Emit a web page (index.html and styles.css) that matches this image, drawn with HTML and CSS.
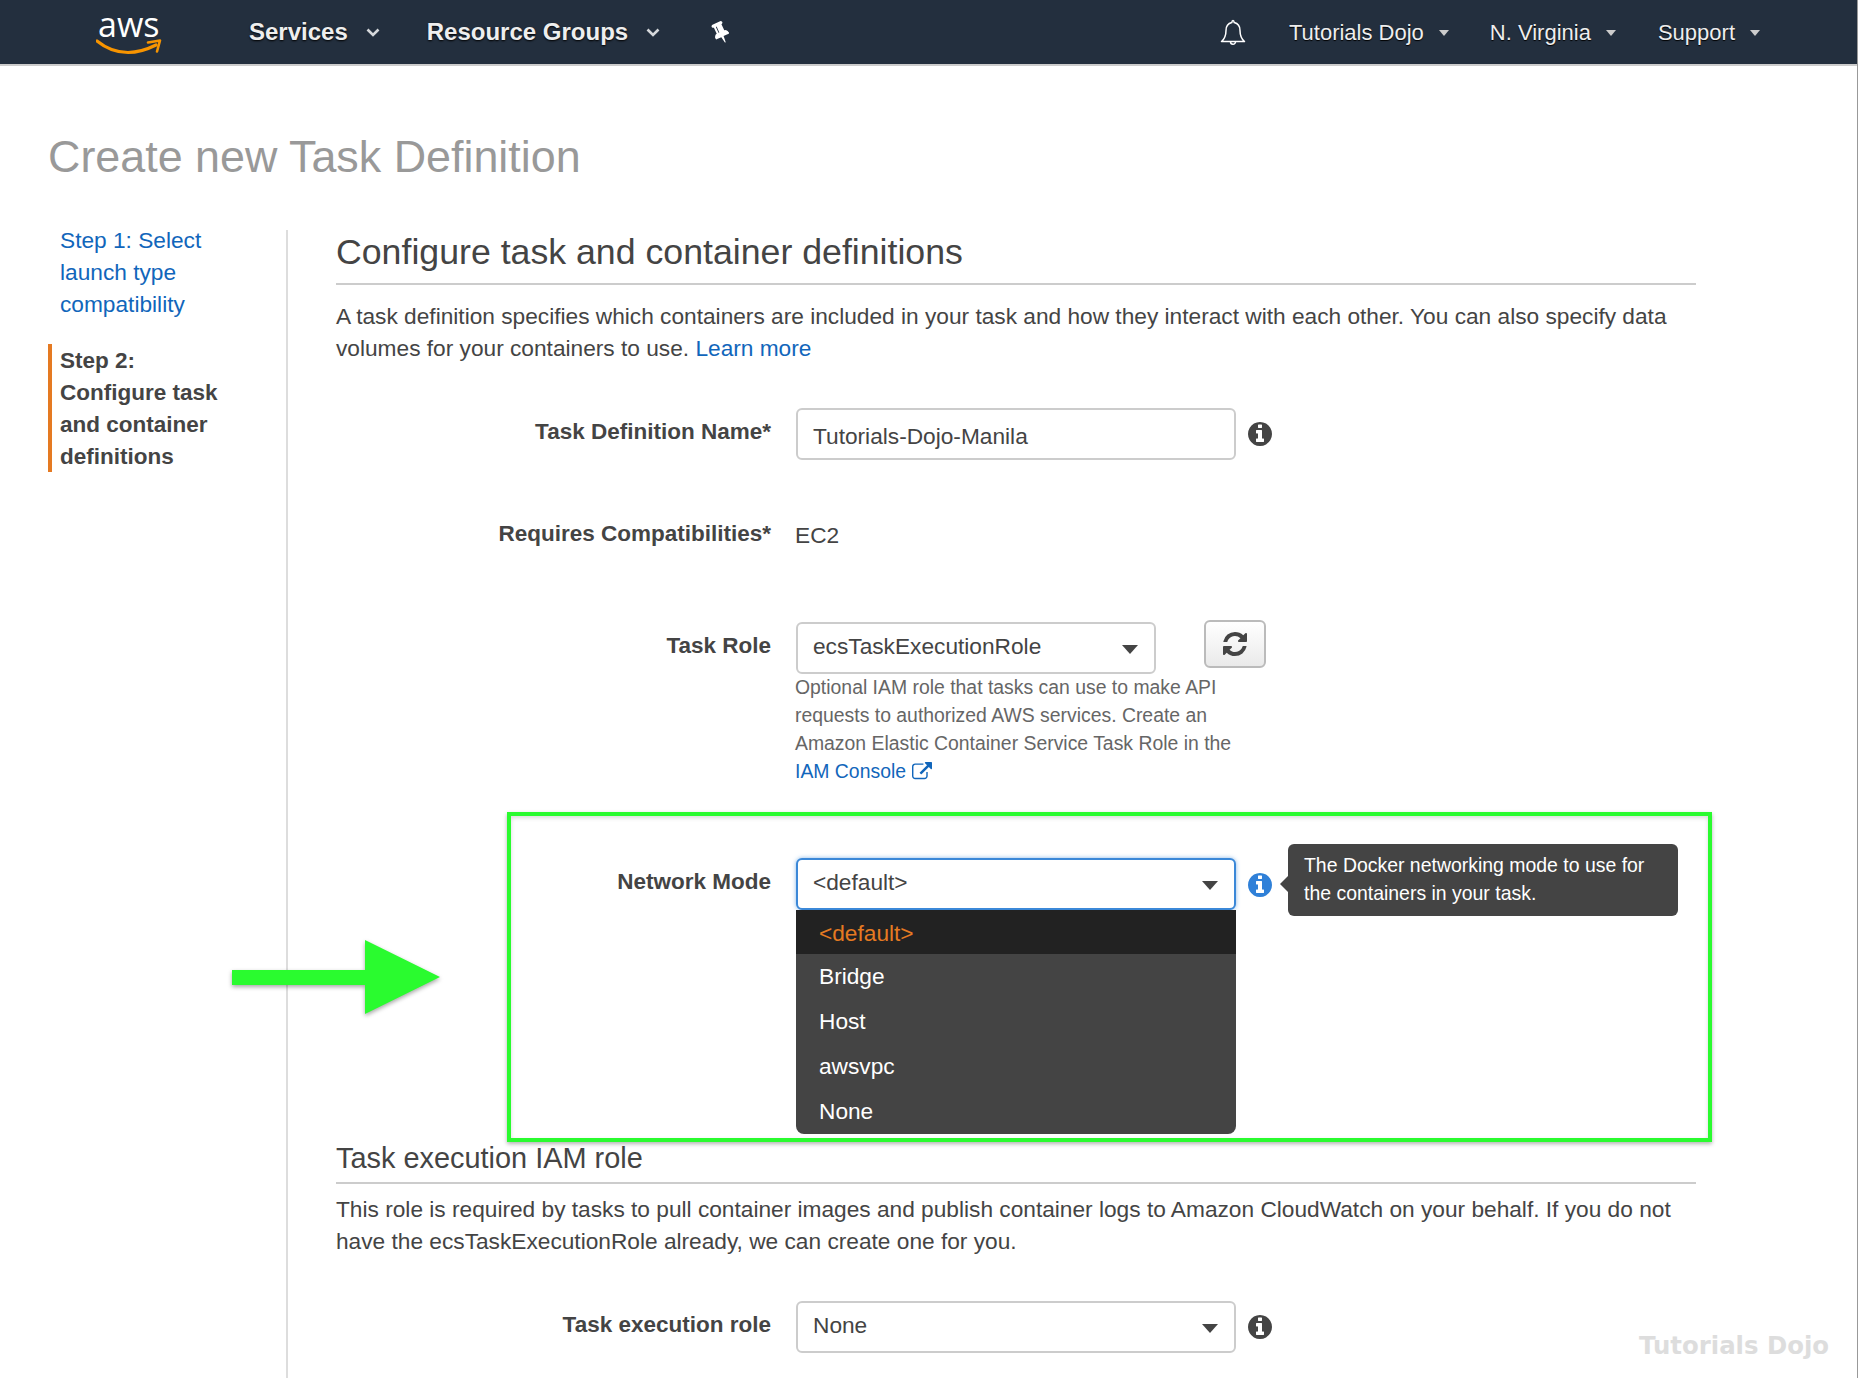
FILE: index.html
```html
<!DOCTYPE html>
<html lang="en">
<head>
<meta charset="utf-8">
<title>Create new Task Definition</title>
<link rel="stylesheet" href="styles.css">
</head>
<body>
<div class="page">
  <header class="nav">
    <div class="logo">
      <span class="logo-text">aws</span>
      <svg class="smile" viewBox="0 0 66 16"><path d="M1 2C12 11 22 13.500 32 13.500C43 13.500 52 10 60 6" fill="none" stroke="#f79400" stroke-width="3.200" stroke-linecap="round"/><path d="M52 3.500L64 1.500L61 12.500" fill="none" stroke="#f79400" stroke-width="2.600" stroke-linejoin="round" stroke-linecap="round"/></svg>
    </div>
    <a class="nav-main nav-services">Services<svg class="chev" viewBox="0 0 14 9"><path d="M1.500 1.500L7 7L12.500 1.500" fill="none" stroke="#d5d8db" stroke-width="2.600"/></svg></a>
    <a class="nav-main nav-groups">Resource Groups<svg class="chev" viewBox="0 0 14 9"><path d="M1.500 1.500L7 7L12.500 1.500" fill="none" stroke="#d5d8db" stroke-width="2.600"/></svg></a>
    <svg class="pin" viewBox="0 0 1152 1792"><path fill="#fff" d="M480 864v-448q0-14-9-23t-23-9-23 9-9 23v448q0 14 9 23t23 9 23-9 9-23zm672 352q0 26-19 45t-45 19h-429l-51 483q-2 12-10.500 20.500t-20.500 8.500h-1q-27 0-32-27l-76-485h-404q-26 0-45-19t-19-45q0-123 78.500-221.500t177.500-98.500v-512q-52 0-90-38t-38-90 38-90 90-38h640q52 0 90 38t38 90-38 90-90 38v512q99 0 177.500 98.500t78.500 221.500z"/></svg>
    <div class="nav-right">
      <svg class="bell" viewBox="0 0 26 27"><path d="M13 1.500C13 1.500 14 1.500 14.200 3.600C18 4.500 20 7.500 20 11.500C20 17 21 19.500 24.500 22.500H1.500C5 19.500 6 17 6 11.500C6 7.500 8 4.500 11.800 3.600C12 1.500 13 1.500 13 1.500Z" fill="none" stroke="#fff" stroke-width="1.500" stroke-linejoin="round"/><path d="M10.500 22.800a2.500 2.500 0 0 0 5 0" fill="none" stroke="#fff" stroke-width="1.500"/></svg>
      <a class="nav-sub nav-user">Tutorials Dojo<i class="nav-caret"></i></a>
      <a class="nav-sub nav-region">N. Virginia<i class="nav-caret"></i></a>
      <a class="nav-sub">Support<i class="nav-caret"></i></a>
    </div>
  </header>

  <h1 class="title">Create new Task Definition</h1>

  <div class="wizard">
    <aside class="steps">
      <a class="step step-link">Step 1: Select launch type compatibility</a>
      <div class="step step-current">Step 2:<br>Configure task and container definitions</div>
    </aside>
    <main class="content">
      <h2 class="section-title">Configure task and container definitions</h2>
      <p class="intro">A task definition specifies which containers are included in your task and how they interact with each other. You can also specify data volumes for your containers to use. <a class="link">Learn more</a></p>

      <div class="row row-name">
        <label class="label">Task Definition Name*</label>
        <div class="control wide text-input">Tutorials-Dojo-Manila</div>
        <svg class="info" viewBox="128 128 1536 1536"><use href="#info-glyph"/></svg>
      </div>

      <div class="row row-compat">
        <label class="label label-plain">Requires Compatibilities*</label>
        <div class="static">EC2</div>
      </div>

      <div class="row row-role">
        <label class="label">Task Role</label>
        <div class="role-col">
          <div class="role-top">
            <div class="control narrow">ecsTaskExecutionRole<i class="caret"></i></div>
            <button class="refresh" type="button"><svg viewBox="0 0 1792 1792"><path fill="#444" d="M1639 1056q0 5-1 7-64 268-268 434.500t-478 166.500q-146 0-282.500-55t-243.500-157l-129 129q-19 19-45 19t-45-19-19-45v-448q0-26 19-45t45-19h448q26 0 45 19t19 45-19 45l-137 137q71 66 161 102t187 36q134 0 250-65t186-179q11-17 53-117 8-23 30-23h192q13 0 22.500 9.500t9.500 22.500zm25-800v448q0 26-19 45t-45 19h-448q-26 0-45-19t-19-45 19-45l138-138q-148-137-349-137-134 0-250 65t-186 179q-11 17-53 117-8 23-30 23h-199q-13 0-22.500-9.500t-9.500-22.500v-7q65-268 270-434.500t480-166.500q146 0 284 55.500t245 156.500l130-129q19-19 45-19t45 19 19 45z"/></svg></button>
          </div>
          <p class="help">Optional IAM role that tasks can use to make API requests to authorized AWS services. Create an Amazon Elastic Container Service Task Role in the <a class="link">IAM Console<svg class="ext" viewBox="0 0 1792 1792"><path fill="#1166bb" d="M1408 928v320q0 119-84.500 203.500t-203.500 84.500h-832q-119 0-203.500-84.500t-84.500-203.500v-832q0-119 84.500-203.500t203.500-84.500h704q14 0 23 9t9 23v64q0 14-9 23t-23 9h-704q-66 0-113 47t-47 113v832q0 66 47 113t113 47h832q66 0 113-47t47-113v-320q0-14 9-23t23-9h64q14 0 23 9t9 23zm384-864v512q0 26-19 45t-45 19-45-19l-176-176-652 652q-10 10-23 10t-23-10l-114-114q-10-10-10-23t10-23l652-652-176-176q-19-19-19-45t19-45 45-19h512q26 0 45 19t19 45z"/></svg></a></p>
        </div>
      </div>

      <div class="row row-network">
        <label class="label">Network Mode</label>
        <div class="select-wrap">
          <div class="control wide focused">&lt;default&gt;<i class="caret"></i></div>
          <ul class="menu">
            <li class="menu-item menu-active">&lt;default&gt;</li>
            <li class="menu-item">Bridge</li>
            <li class="menu-item">Host</li>
            <li class="menu-item">awsvpc</li>
            <li class="menu-item">None</li>
          </ul>
        </div>
        <div class="info-wrap">
          <svg class="info info-active" viewBox="128 128 1536 1536"><use href="#info-glyph"/></svg>
          <div class="tooltip">The Docker networking mode to use for the containers in your task.</div>
        </div>
      </div>

      <h3 class="subsection">Task execution IAM role</h3>
      <p class="sub-intro">This role is required by tasks to pull container images and publish container logs to Amazon CloudWatch on your behalf. If you do not have the ecsTaskExecutionRole already, we can create one for you.</p>

      <div class="row row-exec">
        <label class="label">Task execution role</label>
        <div class="control wide">None<i class="caret"></i></div>
        <svg class="info" viewBox="128 128 1536 1536"><use href="#info-glyph"/></svg>
      </div>
    </main>
  </div>

  <div class="highlight"></div>
  <svg class="arrow" viewBox="0 0 216 84"><path d="M2 32H135V2L210 39L135 76V47H2Z" fill="#2afb2f"/></svg>
  <div class="watermark">Tutorials Dojo</div>
</div>

<svg class="defs" width="0" height="0"><defs><path id="info-glyph" d="M1152 1376v-160q0-14-9-23t-23-9h-96v-512q0-14-9-23t-23-9h-320q-14 0-23 9t-9 23v160q0 14 9 23t23 9h96v320h-96q-14 0-23 9t-9 23v160q0 14 9 23t23 9h448q14 0 23-9t9-23zm-128-896v-160q0-14-9-23t-23-9h-192q-14 0-23 9t-9 23v160q0 14 9 23t23 9h192q14 0 23-9t9-23zm640 416q0 209-103 385.500t-279.500 279.500-385.500 103-385.500-103-279.500-279.500-103-385.500 103-385.500 279.500-279.500 385.500-103 385.500 103 279.500 279.500 103 385.500z"/></defs></svg>
</body>
</html>
```
FILE: styles.css
```css
* { box-sizing: border-box; }
html, body { margin: 0; padding: 0; background: #fff; }
body { font-family: "Liberation Sans", Arial, sans-serif; color: #444; font-size: 22.7px; line-height: 32px; }
a { text-decoration: none; }
.defs { position: absolute; }

.page { position: relative; width: 1858px; height: 1378px; overflow: hidden; border-right: 1px solid #999; }

/* top bar */
.nav { display: flex; align-items: center; height: 66px; background: #232f3e; border-bottom: 2px solid #ccc; padding-left: 96px; color: #fff; }
.logo { width: 66px; height: 42px; position: relative; margin-right: 87px; flex: none; }
.logo-text { position: absolute; left: 2px; top: -7px; font-family: "Open Sans", sans-serif; font-size: 34px; line-height: 40px; color: #fff; }
.smile { position: absolute; left: 0; top: 28px; width: 66px; height: 16px; }
.nav-main { display: flex; align-items: center; font-weight: 700; font-size: 24px; color: #eee; text-shadow: 0 1px 2px #000; }
.chev { width: 14px; height: 9px; margin-left: 18px; }
.nav-services { margin-right: 47px; }
.nav-groups { margin-right: 53px; }
.pin { width: 15px; height: 24px; transform: rotate(-25deg); }
.nav-right { margin-left: auto; display: flex; align-items: center; padding-right: 97px; }
.bell { width: 26px; height: 27px; margin-right: 43px; }
.nav-sub { display: flex; align-items: center; font-size: 22px; color: #eee; text-shadow: 0 1px 1px #000; padding-top: 1px; }
.nav-user { margin-right: 41px; }
.nav-region { margin-right: 42px; }
.nav-caret { width: 0; height: 0; border-left: 5px solid transparent; border-right: 5px solid transparent; border-top: 6px solid #ccc; margin-left: 15px; }

.title { margin: 66px 0 0 48px; font-size: 44.85px; line-height: 50px; font-weight: 400; color: #999; }

/* wizard layout */
.wizard { display: flex; margin-top: 48px; }
.steps { width: 240px; margin-left: 48px; height: 1200px; border-right: 2px solid #ddd; flex: none; }
.step { display: block; padding-left: 13px; width: 190px; }
.step-link { color: #1166bb; margin-top: -6px; padding-left: 12px; }
.step-current { margin-top: 24px; height: 128px; font-weight: 700; font-size: 22.5px; border-left: 4px solid #e57a22; padding: 1px 0 0 8px; color: #444; width: 190px; }
.content { width: 1360px; margin-left: 48px; flex: none; }
.link { color: #1166bb; }

.section-title { margin: 0; padding-bottom: 9px; border-bottom: 2px solid #ccc; font-size: 35.7px; line-height: 44px; font-weight: 400; color: #444; }
.intro { margin: 15px 0 0; }

.row { display: flex; align-items: flex-start; }
.label { width: 435px; margin-right: 25px; text-align: right; font-weight: 700; font-size: 22.5px; padding-top: 8px; flex: none; }
.label-plain { padding-top: 0; }
.control { position: relative; height: 52px; border: 2px solid #ccc; border-radius: 6px; background: #fff; padding: 0 15px; line-height: 45px; flex: none; }
.text-input { line-height: 52px; }
.wide { width: 440px; }
.narrow { width: 360px; }
.focused { border-color: #3b88d8; box-shadow: 0 0 4px rgba(59,136,216,.6); }
.caret { position: absolute; right: 16px; top: 21px; width: 0; height: 0; border-left: 8px solid transparent; border-right: 8px solid transparent; border-top: 9px solid #444; }
.info { width: 24px; height: 24px; margin: 14px 0 0 12px; fill: #444; flex: none; }
.info-active { fill: #2f80d8; margin-top: 15px; }

.row-name { margin-top: 44px; }
.row-compat { margin-top: 58px; }
.static { line-height: 34px; margin-left: -1px; }
.row-role { margin-top: 70px; }
.role-top { display: flex; align-items: flex-start; }
.refresh { width: 62px; height: 48px; margin: -2px 0 0 48px; border: 2px solid #bbb; border-radius: 6px; background: linear-gradient(#fff, #eaeaea); padding: 0; display: flex; align-items: center; justify-content: center; }
.refresh svg { width: 28px; height: 28px; }
.help { margin: -1px 0 0 -1px; width: 440px; font-size: 19.4px; line-height: 28px; color: #666; }
.ext { width: 20px; height: 20px; margin-left: 6px; vertical-align: -4px; }

.row-network { margin-top: 73px; }
.select-wrap { position: relative; flex: none; }
.menu { position: absolute; left: 0; top: 52px; z-index: 2; width: 440px; margin: 0; padding: 0; list-style: none; background: #444; border-radius: 0 0 8px 8px; overflow: hidden; color: #fff; }
.menu-item { height: 45px; line-height: 45px; padding-left: 23px; }
.menu-active { height: 44px; line-height: 46px; background: #222; color: #e57a22; }
.info-wrap { position: relative; flex: none; }
.tooltip { position: absolute; left: 52px; top: -14px; width: 390px; height: 72px; padding: 7px 16px; background: #444; border-radius: 6px; color: #fff; font-size: 19.45px; line-height: 28px; }
.tooltip::before { content: ""; position: absolute; left: -8px; top: 32px; border-top: 8px solid transparent; border-bottom: 8px solid transparent; border-right: 8px solid #444; }

.subsection { margin: 230px 0 0; padding-bottom: 6px; border-bottom: 2px solid #ccc; font-size: 28.9px; line-height: 36px; font-weight: 400; color: #444; }
.sub-intro { margin: 9px 0 0; }
.row-exec { margin-top: 44px; }

/* annotations lying over the screenshot */
.highlight { position: absolute; left: 507px; top: 812px; width: 1205px; height: 330px; border: 4px solid #2afb2f; box-shadow: 0 2px 4px rgba(0,0,0,.3), inset 0 2px 4px rgba(0,0,0,.15); z-index: 3; }
.arrow { position: absolute; left: 230px; top: 938px; width: 216px; height: 84px; filter: drop-shadow(0 2px 2px rgba(0,0,0,.35)); z-index: 3; }
.watermark { position: absolute; left: 1639px; top: 1330px; font-family: "DejaVu Sans", sans-serif; font-weight: 700; font-size: 24.4px; line-height: 32px; color: #ddd; }
```
